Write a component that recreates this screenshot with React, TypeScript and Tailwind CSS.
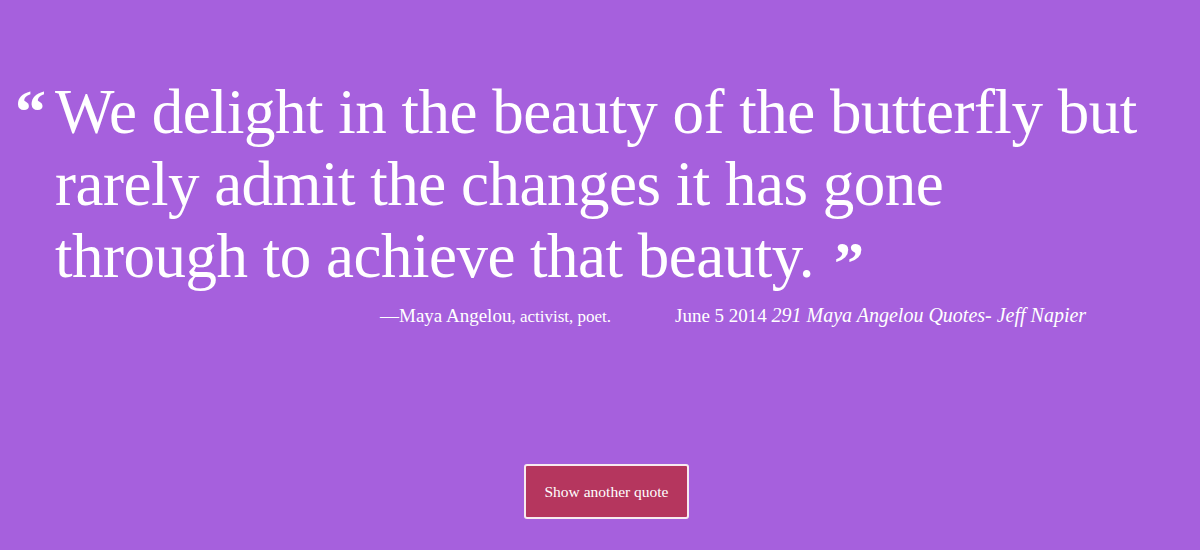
export default function App() {
  return (
    <div className="min-h-[550px] w-full bg-[#a660dd] text-white font-['Liberation_Serif',serif] flex flex-col">
      <div className="pt-[76px] pl-[15px] pr-[40px]">
        <div className="flex items-start">
          <span className="text-[62px] leading-none font-bold w-[40px] mt-[4px]">“</span>
          <p className="text-[63px] leading-[72px] tracking-[-0.5px]">
            We delight in the beauty of the butterfly but<br />
            rarely admit the changes it has gone<br />
            through to achieve that beauty.
            <span className="text-[60px] font-bold ml-[20px] relative top-[6px]">”</span>
          </p>
        </div>
        <div className="mt-[10px] flex items-baseline text-[19px] leading-[24px]">
          <div className="ml-[365px] w-[295px]">
            —Maya Angelou<span className="text-[17px]">, activist, poet.</span>
          </div>
          <div>
            June 5 2014 <span className="italic text-[20px]">291 Maya Angelou Quotes- Jeff Napier</span>
          </div>
        </div>
      </div>
      <div className="flex justify-center mt-[135px] pl-[13px]">
        <button className="w-[165px] h-[55px] bg-[#b5365e] border-2 border-white/90 rounded-[3px] text-[15.5px] text-white">
          Show another quote
        </button>
      </div>
    </div>
  );
}
